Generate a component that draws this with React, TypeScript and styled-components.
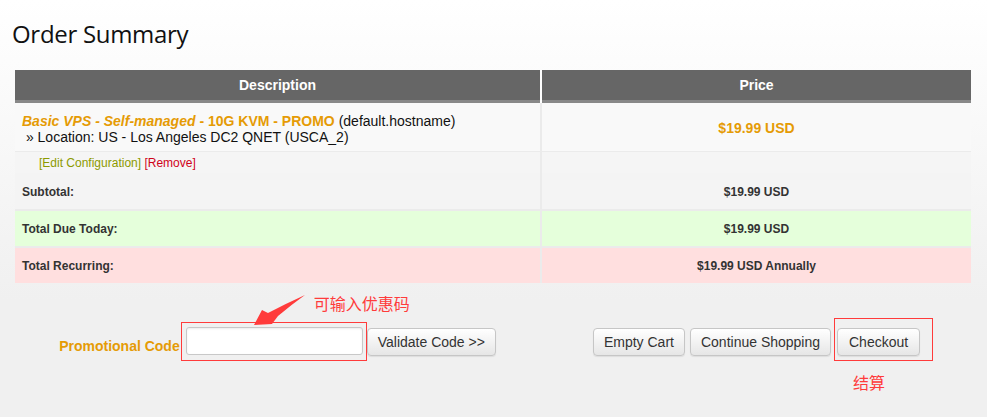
import React from 'react';
import styled, {createGlobalStyle, css} from 'styled-components';

const GlobalStyle = createGlobalStyle`
  html, body {
    margin: 0;
    padding: 0;
  }
  body {
    min-height: 417px;
    background: linear-gradient(#ffffff 0, #f0f0f0 300px) no-repeat, #f0f0f0;
    font-family: "Liberation Sans", Arial, sans-serif;
    color: #222;
  }
`;

const orange = '#e59b05';
const annotation = '#ff3b3b';

type Tone = 'plain' | 'green' | 'red';

const toneColors: Record<Tone, string> = {
    plain: '#f4f4f4',
    green: '#e5ffdb',
    red: '#ffdfdf',
};

export default function App() {
    return (
        <>
            <GlobalStyle/>
            <Page>
                <Title>Order Summary</Title>
                <Cart>
                    <HeaderRow>
                        <HeadCell>Description</HeadCell>
                        <HeadCell>Price</HeadCell>
                    </HeaderRow>
                    <ItemRow>
                        <ItemDesc>
                            <div>
                                <ProductName><em>Basic VPS - Self-managed</em> - 10G KVM - PROMO</ProductName>
                                {' '}(default.hostname)
                            </div>
                            <div>&nbsp;» Location: US - Los Angeles DC2 QNET (USCA_2)</div>
                        </ItemDesc>
                        <ItemPrice>$19.99 USD</ItemPrice>
                    </ItemRow>
                    <ActionRow>
                        <ActionCell>
                            <ActionLink $kind="edit">[Edit Configuration]</ActionLink>{' '}
                            <ActionLink $kind="remove">[Remove]</ActionLink>
                        </ActionCell>
                        <ActionCell/>
                    </ActionRow>
                    <TotalRow $tone="plain" $gap={1}>
                        <TotalLabel>Subtotal:</TotalLabel>
                        <TotalValue>$19.99 USD</TotalValue>
                    </TotalRow>
                    <TotalRow $tone="green" $gap={2}>
                        <TotalLabel>Total Due Today:</TotalLabel>
                        <TotalValue>$19.99 USD</TotalValue>
                    </TotalRow>
                    <TotalRow $tone="red" $gap={2}>
                        <TotalLabel>Total Recurring:</TotalLabel>
                        <TotalValue>$19.99 USD Annually</TotalValue>
                    </TotalRow>
                </Cart>

                <Footer>
                    <PromoArea>
                        <PromoLabel>Promotional Code</PromoLabel>
                        <InputFrame>
                            <PromoInput type="text"/>
                            <Arrow width="58" height="36" viewBox="0 0 58 36">
                                <path d="M54 4 Q34 13 17 22 L11 19 L3 34 L21 33 L27 25 Q40 14 54 4 Z" fill={annotation}/>
                            </Arrow>
                            <Note $left={132} $top={-28}>可输入优惠码</Note>
                        </InputFrame>
                        <Button>Validate Code &gt;&gt;</Button>
                    </PromoArea>
                    <ButtonArea>
                        <Button>Empty Cart</Button>
                        <Button>Continue Shopping</Button>
                        <CheckoutWrap>
                            <Button $minWidth={83}>Checkout</Button>
                            <MarkBox/>
                            <Note $left={16} $top={46}>结算</Note>
                        </CheckoutWrap>
                    </ButtonArea>
                </Footer>
            </Page>
        </>
    );
}

const Page = styled.div`
  width: 956px;
  padding: 0 16px 0 15px;
`;

const Title = styled.h1`
  margin: 17px 0 19px -3px;
  font-family: "Open Sans", "Noto Sans", sans-serif;
  font-weight: 400;
  font-size: 24px;
  line-height: 34px;
  letter-spacing: -0.3px;
  color: #111;
`;

const Cart = styled.div`
  display: flex;
  flex-direction: column;
  background: #ebebeb;
`;

const Row = styled.div`
  display: grid;
  grid-template-columns: 525px 429px;
  column-gap: 2px;
`;

const HeaderRow = styled(Row)`
  background: #fff;
`;

const HeadCell = styled.div`
  height: 30px;
  line-height: 30px;
  background: #666;
  border-bottom: 3px solid #888;
  color: #fff;
  font-weight: 700;
  font-size: 14px;
  text-align: center;
`;

const ItemRow = styled(Row)`
  height: 48px;
`;

const ItemDesc = styled.div`
  display: flex;
  flex-direction: column;
  justify-content: center;
  padding: 3px 7px 0;
  background: #f9f9f9;
  font-size: 14px;
  line-height: 16px;
  color: #111;
`;

const ProductName = styled.strong`
  color: ${orange};
`;

const ItemPrice = styled.div`
  display: flex;
  align-items: center;
  justify-content: center;
  padding-top: 2px;
  background: #f9f9f9;
  color: ${orange};
  font-weight: 700;
  font-size: 14px;
`;

const ActionRow = styled(Row)`
  height: 20px;
  margin-top: 1px;
`;

const ActionCell = styled.div`
  background: #f5f5f5;
  padding: 1px 0 0 24px;
  font-size: 12px;
  line-height: 20px;
`;

const ActionLink = styled.span<{ $kind: 'edit' | 'remove' }>`
  ${({$kind}) => $kind === 'edit'
    ? css`color: #8c9a00;`
    : css`color: #d0021b;`}
`;

const TotalRow = styled(Row)<{ $tone: Tone; $gap: number }>`
  height: ${({$tone}) => ($tone === 'plain' ? 36 : 35)}px;
  margin-top: ${({$gap}) => $gap}px;

  & > div {
    background: ${({$tone}) => toneColors[$tone]};
  }
`;

const TotalLabel = styled.div`
  display: flex;
  align-items: center;
  padding: 1px 0 0 7px;
  font-weight: 700;
  font-size: 12px;
  color: #333;
`;

const TotalValue = styled.div`
  display: flex;
  align-items: center;
  justify-content: center;
  padding-top: 1px;
  font-weight: 700;
  font-size: 12px;
  color: #333;
`;

const Footer = styled.div`
  display: grid;
  grid-template-columns: 525px 429px;
  column-gap: 2px;
  align-items: center;
  margin-top: 39px;
`;

const PromoArea = styled.div`
  display: flex;
  align-items: center;
  justify-content: center;
`;

const PromoLabel = styled.span`
  margin-right: 1px;
  padding-top: 8px;
  color: ${orange};
  font-weight: 700;
  font-size: 14px;
`;

const InputFrame = styled.div`
  position: relative;
  display: flex;
  padding: 4px 3px 5px 4px;
  border: 1px solid ${annotation};
`;

const PromoInput = styled.input`
  box-sizing: border-box;
  width: 177px;
  height: 28px;
  margin: 0;
  padding: 0 6px;
  border: 1px solid #c8c8c8;
  border-radius: 3px;
  background: #fff;
  box-shadow: inset 0 1px 2px rgba(0, 0, 0, 0.08);
  font: 14px "Liberation Sans", Arial, sans-serif;
`;

const Arrow = styled.svg`
  position: absolute;
  left: 69px;
  top: -32px;
`;

const Note = styled.span<{ $left: number; $top: number }>`
  position: absolute;
  left: ${({$left}) => $left}px;
  top: ${({$top}) => $top}px;
  white-space: nowrap;
  color: ${annotation};
  font-family: "Noto Sans CJK SC", sans-serif;
  font-size: 16px;
  line-height: 16px;
`;

const Button = styled.button<{ $minWidth?: number }>`
  box-sizing: border-box;
  height: 28px;
  min-width: ${({$minWidth}) => ($minWidth ? `${$minWidth}px` : 'auto')};
  margin: 0;
  padding: 0 10px;
  border: 1px solid #c6c6c6;
  border-radius: 4px;
  background: linear-gradient(#ffffff, #e6e6e6);
  box-shadow: 0 1px 1px rgba(0, 0, 0, 0.08);
  color: #333;
  font: 14px "Liberation Sans", Arial, sans-serif;
  white-space: nowrap;
  cursor: pointer;
`;

const ButtonArea = styled.div`
  display: flex;
  align-items: center;
  justify-content: center;
  gap: 5px;
`;

const CheckoutWrap = styled.div`
  position: relative;
  display: flex;
  margin-left: 1px;
`;

const MarkBox = styled.div`
  position: absolute;
  left: -3px;
  top: -10px;
  width: 97px;
  height: 41px;
  border: 1px solid ${annotation};
  pointer-events: none;
`;
